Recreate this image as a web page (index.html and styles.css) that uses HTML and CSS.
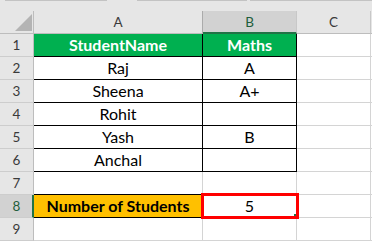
FILE: index.html
```html
<!DOCTYPE html>
<html>
<head>
<meta charset="utf-8">
<link rel="stylesheet" href="styles.css">
</head>
<body>
<div class="sheet">
  <div class="top">
    <span class="seg s1"></span><span class="seg s2"></span><span class="seg s3"></span>
  </div>
  <div class="grid">
    <div class="corner"><svg width="17" height="17" viewBox="0 0 17 17"><polygon points="17,0 17,17 0,17" fill="#b4b4b4"/></svg></div>
    <div class="ch">A</div>
    <div class="ch chsel">B</div>
    <div class="ch">C</div>
    <div class="ch end"></div>

    <div class="rh">1</div>
    <div class="c tb hd">StudentName</div>
    <div class="c tb hd">Maths</div>
    <div class="c"></div>
    <div class="c end"></div>

    <div class="rh">2</div>
    <div class="c tb">Raj</div>
    <div class="c tb">A</div>
    <div class="c"></div>
    <div class="c end"></div>

    <div class="rh">3</div>
    <div class="c tb">Sheena</div>
    <div class="c tb">A+</div>
    <div class="c"></div>
    <div class="c end"></div>

    <div class="rh">4</div>
    <div class="c tb">Rohit</div>
    <div class="c tb"></div>
    <div class="c"></div>
    <div class="c end"></div>

    <div class="rh">5</div>
    <div class="c tb">Yash</div>
    <div class="c tb">B</div>
    <div class="c"></div>
    <div class="c end"></div>

    <div class="rh">6</div>
    <div class="c tb">Anchal</div>
    <div class="c tb"></div>
    <div class="c"></div>
    <div class="c end"></div>

    <div class="rh">7</div>
    <div class="c bb"></div>
    <div class="c"></div>
    <div class="c"></div>
    <div class="c end"></div>

    <div class="rh rhsel">8</div>
    <div class="c tb total">Number of Students</div>
    <div class="c">5</div>
    <div class="c"></div>
    <div class="c end"></div>

    <div class="rh">9</div>
    <div class="c"></div>
    <div class="c"></div>
    <div class="c"></div>
    <div class="c end"></div>
  </div>
  <div class="selection"><span class="handle"></span></div>
</div>
</body>
</html>
```
FILE: styles.css
```css
* { box-sizing: border-box; }
html, body { margin: 0; padding: 0; }
body {
  width: 372px;
  height: 241px;
  overflow: hidden;
  background: #ffffff;
  font-family: Lato, "Liberation Sans", sans-serif;
}
.sheet { position: relative; width: 372px; height: 241px; }

.top {
  height: 11px;
  background: #e6e6e6;
  position: relative;
}
.seg {
  position: absolute;
  top: 0;
  height: 1px;
  background: #c3c3c3;
}
.s1 { left: 5px; width: 102px; }
.s2 { left: 137px; width: 110px; }
.s3 { left: 250px; width: 122px; }

.grid {
  display: grid;
  grid-template-columns: 34px 169px 94px 74px 1fr;
  grid-auto-rows: 23px;
}

.corner {
  background: #e6e6e6;
  border-right: 1px solid #bdbdbd;
  border-bottom: 1px solid #bdbdbd;
  display: flex;
  align-items: flex-end;
  justify-content: flex-end;
  padding: 0 1px 2px 0;
}
.corner svg { display: block; }

.ch {
  background: #e6e6e6;
  border-right: 1px solid #c8c8c8;
  border-bottom: 1px solid #bdbdbd;
  font-size: 13.5px;
  line-height: 22px;
  color: #3a3a3a;
  text-align: center;
}
.ch:nth-child(2) { border-right-color: #ababab; }
.chsel {
  background: #d2d2d2;
  border-bottom: 2px solid #217346;
  color: #1f5e3b;
}
.ch.end { border-right: none; }

.rh {
  background: #e6e6e6;
  border-right: 1px solid #bdbdbd;
  border-bottom: 1px solid #cdcdcd;
  font-size: 13.5px;
  line-height: 22px;
  color: #3a3a3a;
  text-align: center;
}
.rhsel {
  background: #d2d2d2;
  border-right: 2px solid #217346;
  color: #1f5e3b;
  padding-left: 1px;
}

.c {
  border-right: 1px solid #d4d4d4;
  border-bottom: 1px solid #d4d4d4;
  font-size: 16px;
  line-height: 22px;
  color: #000000;
  text-align: center;
  white-space: nowrap;
}
.c.end { border-right: none; }
.tb {
  border-right-color: #000000;
  border-bottom-color: #000000;
}
.bb { border-bottom-color: #000000; }
.hd {
  background: #00b050;
  color: #ffffff;
  font-weight: 700;
}
.total {
  background: #ffc000;
  font-weight: 700;
}

.selection {
  position: absolute;
  left: 201px;
  top: 193px;
  width: 98px;
  height: 26px;
  border: 3px solid #ff0000;
}
.handle {
  position: absolute;
  right: 0;
  bottom: 0;
  width: 2px;
  height: 2px;
  background: #217346;
}
```
